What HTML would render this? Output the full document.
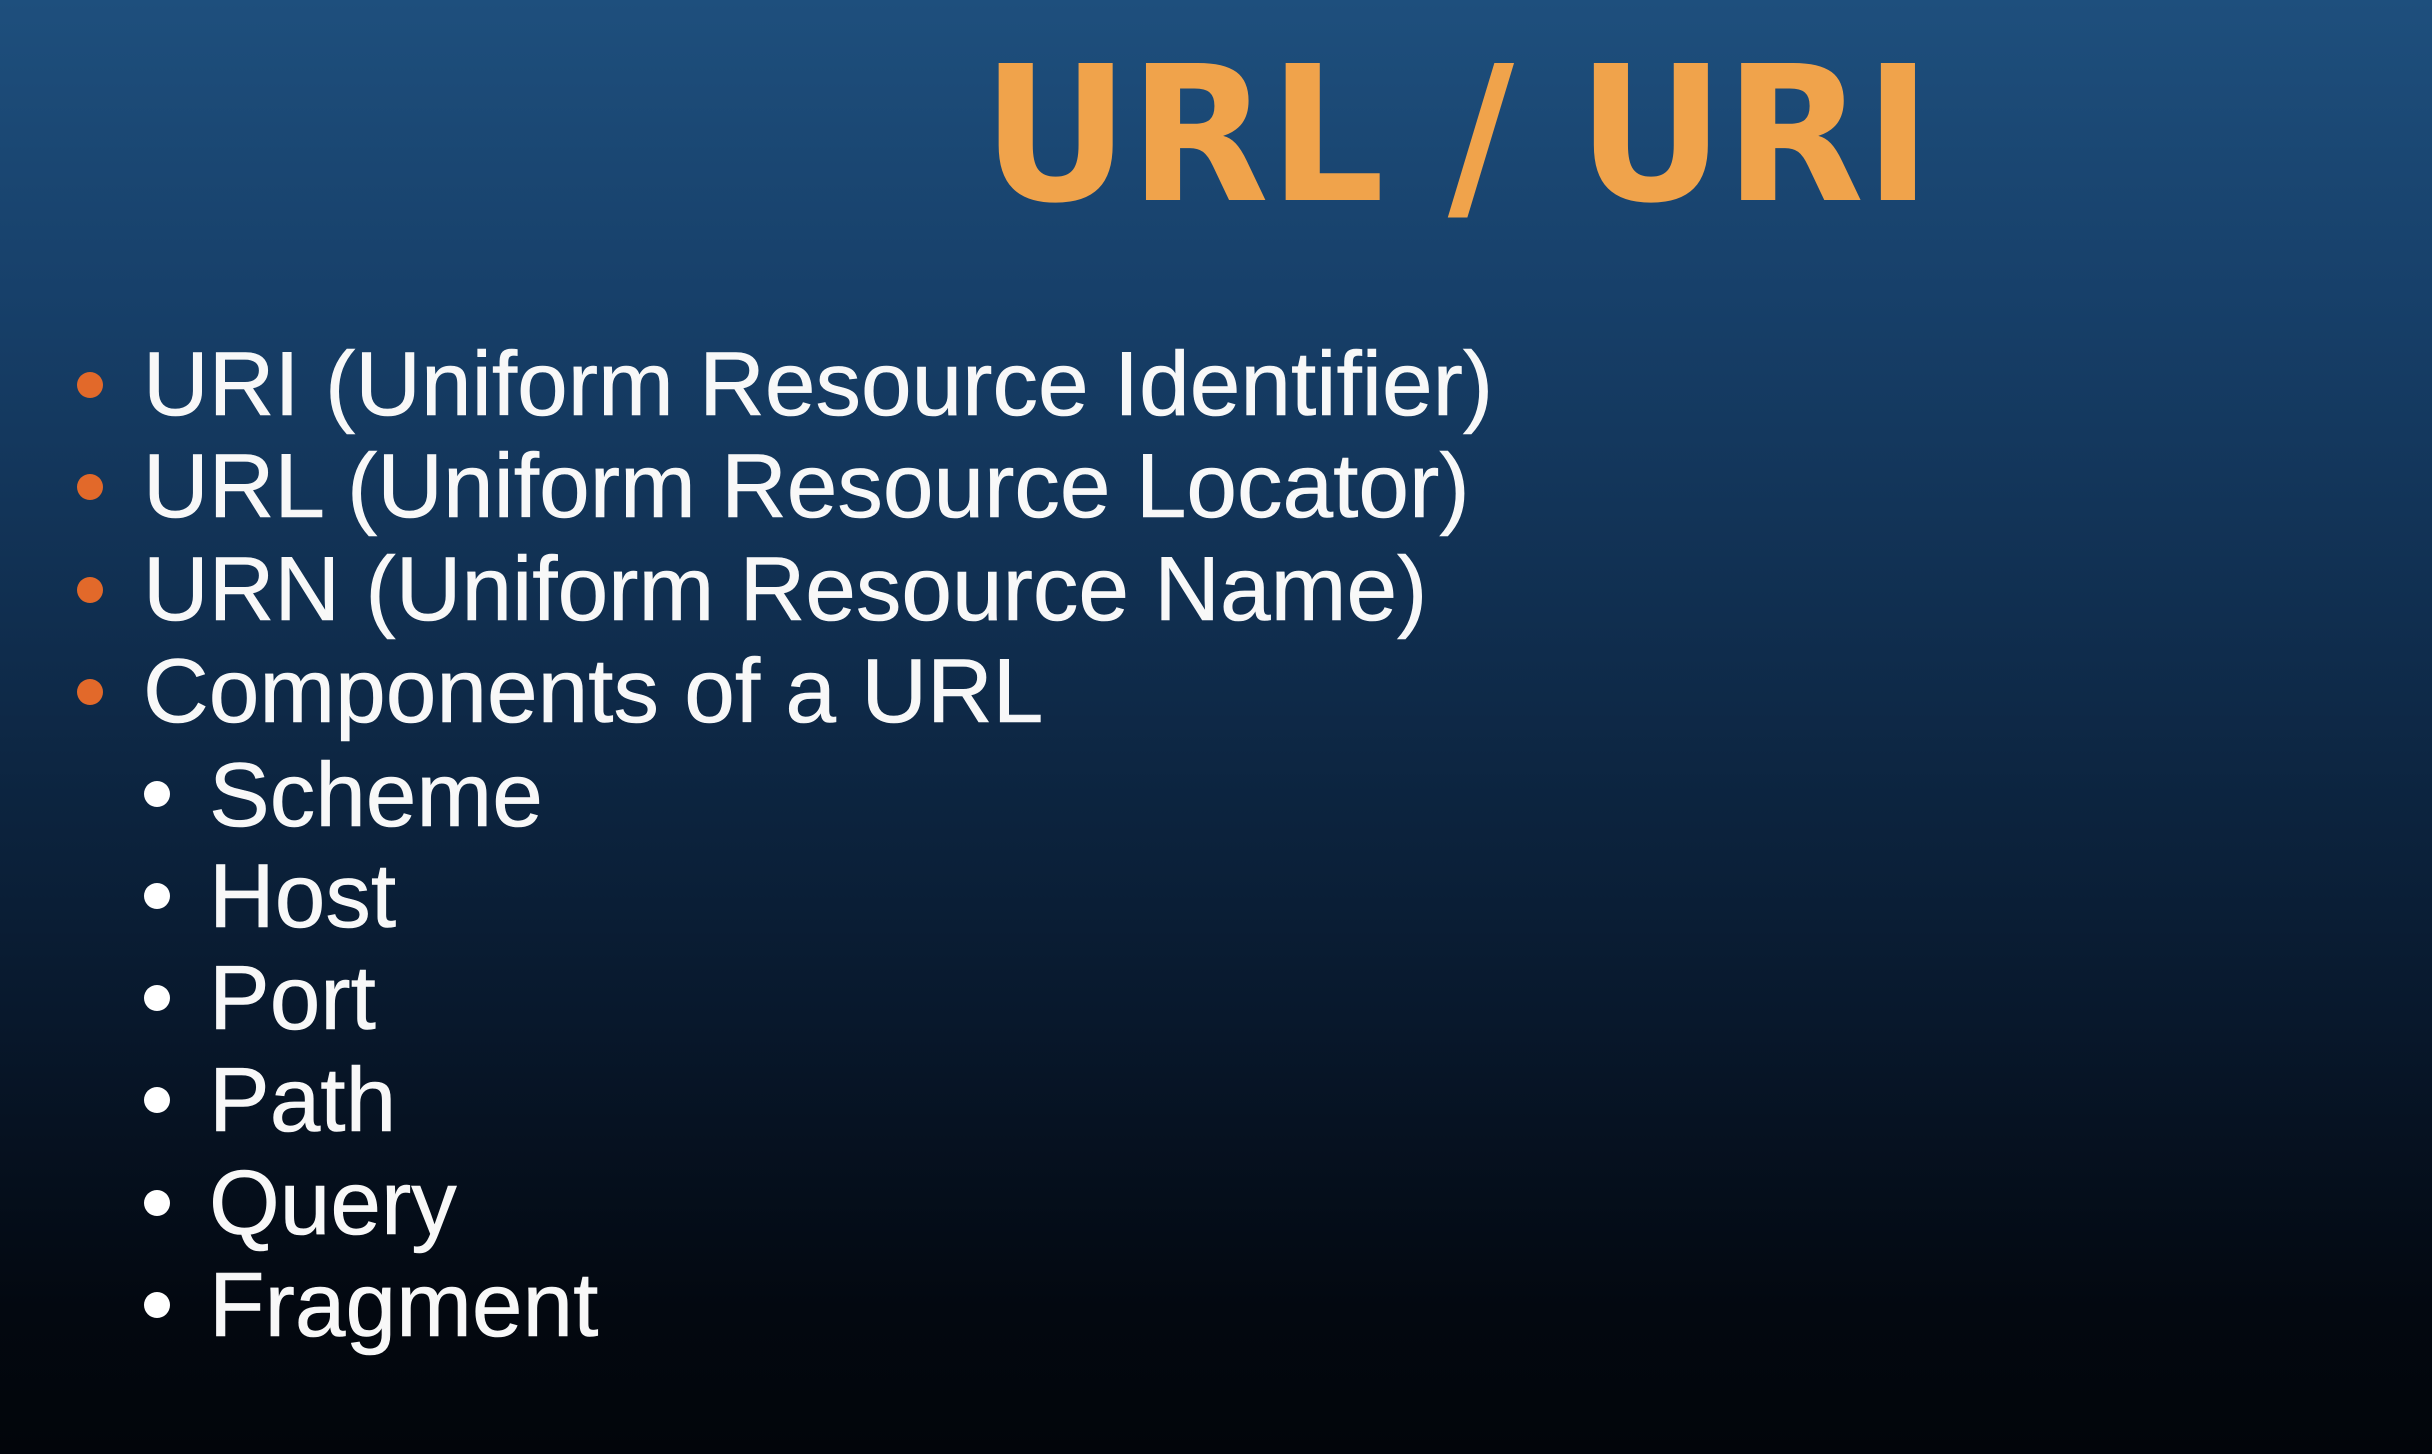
<!DOCTYPE html>
<html><head><meta charset="utf-8"><style>
html,body{margin:0;padding:0}
body{width:2432px;height:1454px;overflow:hidden;position:relative;
background:linear-gradient(180deg,#1e4f7d 0%,#17406a 20%,#0f2c4c 45%,#08182c 70%,#030810 90%,#02050a 100%);
font-family:"Liberation Sans",sans-serif;color:#fff}
.t{position:absolute;left:982px;top:0;font-family:"DejaVu Sans",sans-serif;font-weight:bold;font-size:188px;color:#f0a34b;white-space:nowrap;transform-origin:0 0;transform:scaleX(0.965);line-height:1;}
.l{position:absolute;font-size:91px;line-height:1;white-space:nowrap;color:#f8f8f8;-webkit-text-stroke:0.6px #f8f8f8}
.d{position:absolute;border-radius:50%}
</style></head><body>
<div class="t" style="top:42px">URL / URI</div>
<div class="d" style="left:77px;top:372px;width:26px;height:26px;background:#e2692a"></div>
<div class="l" style="left:143px;top:339px">URI (Uniform Resource Identifier)</div>
<div class="d" style="left:77px;top:474px;width:26px;height:26px;background:#e2692a"></div>
<div class="l" style="left:143px;top:441px">URL (Uniform Resource Locator)</div>
<div class="d" style="left:77px;top:577px;width:26px;height:26px;background:#e2692a"></div>
<div class="l" style="left:143px;top:544px">URN (Uniform Resource Name)</div>
<div class="d" style="left:77px;top:679px;width:26px;height:26px;background:#e2692a"></div>
<div class="l" style="left:143px;top:646px">Components of a URL</div>

<div class="d" style="left:144px;top:781px;width:26px;height:26px;background:#fff"></div>
<div class="l" style="left:209px;top:750px">Scheme</div>
<div class="d" style="left:144px;top:883px;width:26px;height:26px;background:#fff"></div>
<div class="l" style="left:209px;top:851px">Host</div>
<div class="d" style="left:144px;top:985px;width:26px;height:26px;background:#fff"></div>
<div class="l" style="left:209px;top:953px">Port</div>
<div class="d" style="left:144px;top:1087px;width:26px;height:26px;background:#fff"></div>
<div class="l" style="left:209px;top:1055px">Path</div>
<div class="d" style="left:144px;top:1190px;width:26px;height:26px;background:#fff"></div>
<div class="l" style="left:209px;top:1158px">Query</div>
<div class="d" style="left:144px;top:1292px;width:26px;height:26px;background:#fff"></div>
<div class="l" style="left:209px;top:1260px">Fragment</div>
</body></html>
